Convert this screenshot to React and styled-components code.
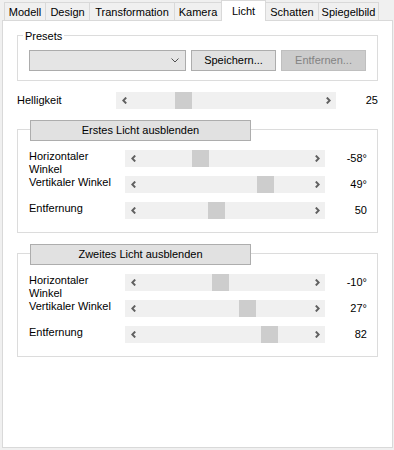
import styled, { createGlobalStyle } from 'styled-components'

const GlobalStyle = createGlobalStyle`
  body {
    margin: 0;
    background: #f0f0f0;
    font-family: "Liberation Sans", "Segoe UI", sans-serif;
    font-size: 11px;
    color: #000;
  }
`

const tabs = [
  { name: 'Modell', width: 42 },
  { name: 'Design', width: 45 },
  { name: 'Transformation', width: 86 },
  { name: 'Kamera', width: 48 },
  { name: 'Licht', width: 45, active: true },
  { name: 'Schatten', width: 54 },
  { name: 'Spiegelbild', width: 61 },
]

const lights = [
  {
    title: 'Erstes Licht ausblenden',
    rows: [
      { label: 'Horizontaler Winkel', value: -58, min: -180, max: 180, unit: '°' },
      { label: 'Vertikaler Winkel', value: 49, min: -90, max: 90, unit: '°' },
      { label: 'Entfernung', value: 50, min: 10, max: 100, unit: '' },
    ],
  },
  {
    title: 'Zweites Licht ausblenden',
    rows: [
      { label: 'Horizontaler Winkel', value: -10, min: -180, max: 180, unit: '°' },
      { label: 'Vertikaler Winkel', value: 27, min: -90, max: 90, unit: '°' },
      { label: 'Entfernung', value: 82, min: 10, max: 100, unit: '' },
    ],
  },
]

const Chevron = ({ dir }) => (
  <svg width="5" height="7" viewBox="0 0 5 7">
    <path
      d={dir === 'left' ? 'M4.2 0.6 L1.3 3.5 L4.2 6.4' : 'M0.8 0.6 L3.7 3.5 L0.8 6.4'}
      fill="none"
      stroke="#606060"
      strokeWidth="2"
    />
  </svg>
)

const Slider = ({ value, min, max, width }) => {
  const frac = (value - min) / (max - min)
  const left = 17 + frac * (width - 34 - 17)
  return (
    <Track $width={width}>
      <Chevron dir="left" />
      <Thumb style={{ left: Math.round(left) }} />
      <Chevron dir="right" />
    </Track>
  )
}

const App = () => (
  <Window>
    <GlobalStyle />
    <TabBar>
      {tabs.map((t) => (
        <Tab key={t.name} $width={t.width} $active={t.active}>
          {t.name}
        </Tab>
      ))}
    </TabBar>

    <Panel>
      <Column>
        <Group>
          <GroupTitle>Presets</GroupTitle>
          <PresetRow>
            <Combo>
              <svg width="8" height="5" viewBox="0 0 8 5">
                <path d="M0.5 0.5 L4 4 L7.5 0.5" fill="none" stroke="#505050" strokeWidth="1" />
              </svg>
            </Combo>
            <Button $width={85}>Speichern...</Button>
            <Button $width={85} disabled>
              Entfernen...
            </Button>
          </PresetRow>
        </Group>

        <BrightnessRow>
          <Label>Helligkeit</Label>
          <Slider value={25} min={0} max={100} width={220} />
          <Value>25</Value>
        </BrightnessRow>

        {lights.map((l) => (
          <LightGroup key={l.title}>
            <Button $width={221} $overlap>
              {l.title}
            </Button>
            <Rows>
              {l.rows.map((r) => (
                <LightRow key={r.label}>
                  <Label>{r.label}</Label>
                  <Slider value={r.value} min={r.min} max={r.max} width={200} />
                  <Value>
                    {r.value}
                    {r.unit}
                  </Value>
                </LightRow>
              ))}
            </Rows>
          </LightGroup>
        ))}
      </Column>
    </Panel>
  </Window>
)

export default App

const Window = styled.div`
  width: 394px;
  height: 450px;
  background: #f0f0f0;
  overflow: hidden;
`

const TabBar = styled.div`
  display: flex;
  align-items: flex-end;
  height: 21px;
  padding-left: 4px;
`

const Tab = styled.div`
  box-sizing: border-box;
  width: ${(p) => p.$width}px;
  height: ${(p) => (p.$active ? 21 : 19)}px;
  margin-left: -1px;
  &:first-child {
    margin-left: 0;
  }
  border: 1px solid #d9d9d9;
  border-bottom: ${(p) => (p.$active ? 'none' : '1px solid #d9d9d9')};
  background: ${(p) => (p.$active ? '#fff' : '#f0f0f0')};
  position: relative;
  z-index: ${(p) => (p.$active ? 2 : 1)};
  display: flex;
  justify-content: center;
  align-items: ${(p) => (p.$active ? 'flex-start' : 'center')};
  padding-top: ${(p) => (p.$active ? 3 : 0)}px;
  line-height: 14px;
  white-space: nowrap;
`

const Panel = styled.div`
  box-sizing: border-box;
  margin: -1px 2px 0 2px;
  height: 428px;
  width: 391px;
  border: 1px solid #d9d9d9;
  background: #fff;
`

const Column = styled.div`
  width: 361px;
  margin-left: 14px;
  padding-top: 14px;
`

const Group = styled.div`
  position: relative;
  border: 1px solid #dcdcdc;
  padding: 14px 11px 9px 11px;
`

const GroupTitle = styled.span`
  position: absolute;
  top: -7px;
  left: 5px;
  padding: 0 2px;
  background: #fff;
  line-height: 14px;
`

const PresetRow = styled.div`
  display: flex;
  gap: 5px;
`

const Combo = styled.div`
  box-sizing: border-box;
  width: 157px;
  height: 21px;
  background: #e5e5e5;
  border: 1px solid #acacac;
  display: flex;
  align-items: center;
  justify-content: flex-end;
  padding-right: 6px;
`

const Button = styled.button`
  box-sizing: border-box;
  width: ${(p) => p.$width}px;
  height: 21px;
  margin: ${(p) => (p.$overlap ? '-10px 0 0 12px' : '0')};
  padding: 0;
  background: #e1e1e1;
  border: 1px solid #adadad;
  font: inherit;
  color: #000;
  line-height: 17px;
  &:disabled {
    background: #cccccc;
    border-color: #bfbfbf;
    color: #838383;
  }
`

const BrightnessRow = styled.div`
  display: grid;
  grid-template-columns: 99px 220px 1fr;
  align-items: center;
  margin-top: 11px;
`

const Label = styled.div`
  line-height: 13px;
  max-width: 86px;
`

const Value = styled.div`
  text-align: right;
  line-height: 13px;
`

const Track = styled.div`
  position: relative;
  box-sizing: border-box;
  width: ${(p) => p.$width}px;
  height: 17px;
  background: #f0f0f0;
  display: flex;
  align-items: center;
  justify-content: space-between;
  padding: 0 5px 0 6px;
`

const Thumb = styled.div`
  position: absolute;
  top: 0;
  width: 17px;
  height: 17px;
  background: #cdcdcd;
`

const LightGroup = styled.div`
  display: flex;
  flex-direction: column;
  align-items: flex-start;
  border: 1px solid #dcdcdc;
  margin-top: 20px;
  padding-bottom: 4px;
`

const Rows = styled.div`
  align-self: stretch;
  margin-top: 9px;
  padding: 0 10px 0 11px;
`

const LightRow = styled.div`
  display: grid;
  grid-template-columns: 96px 200px 1fr;
  align-items: start;
  height: 26px;
  & > ${Value} {
    padding-top: 2px;
  }
`
